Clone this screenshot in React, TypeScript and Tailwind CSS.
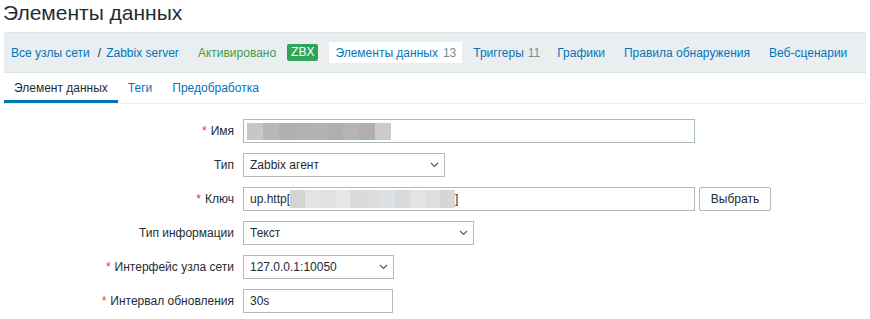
const nameBlur = ["#c7c7c7", "#b8b8b8", "#b0b0b0", "#b1b1b1", "#b3b3b3", "#afafaf", "#b4b4b4", "#b0aeb0", "#cbcbcb"];
const keyBlur = ["#d4d4d4", "#e4e4e4", "#e2e2e2", "#e6e6e6", "#dadada", "#dcdcdc", "#dde1e3", "#d9d9d9", "#e3e3e3", "#dedede", "#d6d6d6"];

const Chevron = () => (
  <svg width="9" height="6" viewBox="0 0 9 6" className="shrink-0">
    <path d="M1 1 L4.5 4.5 L8 1" fill="none" stroke="#5a5a5a" strokeWidth="1.2" />
  </svg>
);

const Label = ({ text, required }: { text: string; required?: boolean }) => (
  <div className="text-right">
    {required && <span className="text-[#e33734] mr-[4px]">*</span>}
    {text}
  </div>
);

const Select = ({ value, width }: { value: string; width: string }) => (
  <div
    className={`${width} h-[24px] border border-[#acbbc2] bg-white flex items-center justify-between pl-[6px] pr-[5px]`}
  >
    <span>{value}</span>
    <Chevron />
  </div>
);

const App = () => {
  return (
    <div className="w-[870px] h-[319px] overflow-hidden bg-white text-[12px] text-[#1f2c33] font-['Liberation_Sans',Arial,sans-serif]">
      <h1 className="text-[21px] leading-[25px] pl-[3px] h-[32px]">Элементы данных</h1>

      <div className="ml-[4px] w-[862px] h-[41px] bg-[#ebeef0] border-y border-[#dfe4e7] flex items-center text-[#0275b8]">
        <span className="ml-[7px]">Все узлы сети</span>
        <span className="ml-[8px] mr-[5px] text-[#1f2c33]">/</span>
        <span>Zabbix server</span>
        <span className="ml-[19px] text-[#429e47]">Активировано</span>
        <span className="ml-[11px] h-[17px] px-[4px] rounded-[2px] bg-[#2fa55a] text-white text-[12px] leading-[17px]">ZBX</span>
        <span className="ml-[11px] h-[21px] px-[6px] bg-white flex items-center">
          Элементы данных<span className="ml-[5px] text-[#768d99]">13</span>
        </span>
        <span className="ml-[11px]">
          Триггеры<span className="ml-[4px] text-[#768d99]">11</span>
        </span>
        <span className="ml-[17px]">Графики</span>
        <span className="ml-[19px]">Правила обнаружения</span>
        <span className="ml-[19px]">Веб-сценарии</span>
      </div>

      <div className="ml-[4px] w-[862px] h-[31px] border-b border-[#ebeef0] flex items-stretch text-[#0275b8]">
        <div className="px-[10px] flex items-center border-b-[3px] border-[#0275b8] text-[#1f2c33] pt-[3px]">
          Элемент данных
        </div>
        <div className="px-[10px] flex items-center">Теги</div>
        <div className="px-[10px] flex items-center">Предобработка</div>
      </div>

      <div className="grid grid-cols-[234px_auto] gap-x-[9px] gap-y-[10px] items-center pt-[15px]">
        <Label text="Имя" required />
        <div className="w-[452px] h-[24px] border border-[#acbbc2] flex items-center pl-[3px]">
          <div className="flex h-[17px]">
            {nameBlur.map((c, i) => (
              <div key={i} className="w-[16px] h-full" style={{ backgroundColor: c }} />
            ))}
          </div>
        </div>

        <Label text="Тип" />
        <Select value="Zabbix агент" width="w-[202px]" />

        <Label text="Ключ" required />
        <div className="flex items-center gap-[4px]">
          <div className="w-[452px] h-[24px] border border-[#acbbc2] flex items-center pl-[6px]">
            <span>up.http[</span>
            <div className="flex h-[18px]">
              {keyBlur.map((c, i) => (
                <div key={i} className="w-[15px] h-full" style={{ backgroundColor: c }} />
              ))}
            </div>
            <span>]</span>
          </div>
          <div className="w-[72px] h-[24px] border border-[#acbbc2] rounded-[2px] flex items-center justify-center">
            Выбрать
          </div>
        </div>

        <Label text="Тип информации" />
        <Select value="Текст" width="w-[231px]" />

        <Label text="Интерфейс узла сети" required />
        <Select value="127.0.0.1:10050" width="w-[151px]" />

        <Label text="Интервал обновления" required />
        <div className="w-[150px] h-[24px] border border-[#acbbc2] flex items-center pl-[6px]">30s</div>
      </div>
    </div>
  );
};

export default App;
